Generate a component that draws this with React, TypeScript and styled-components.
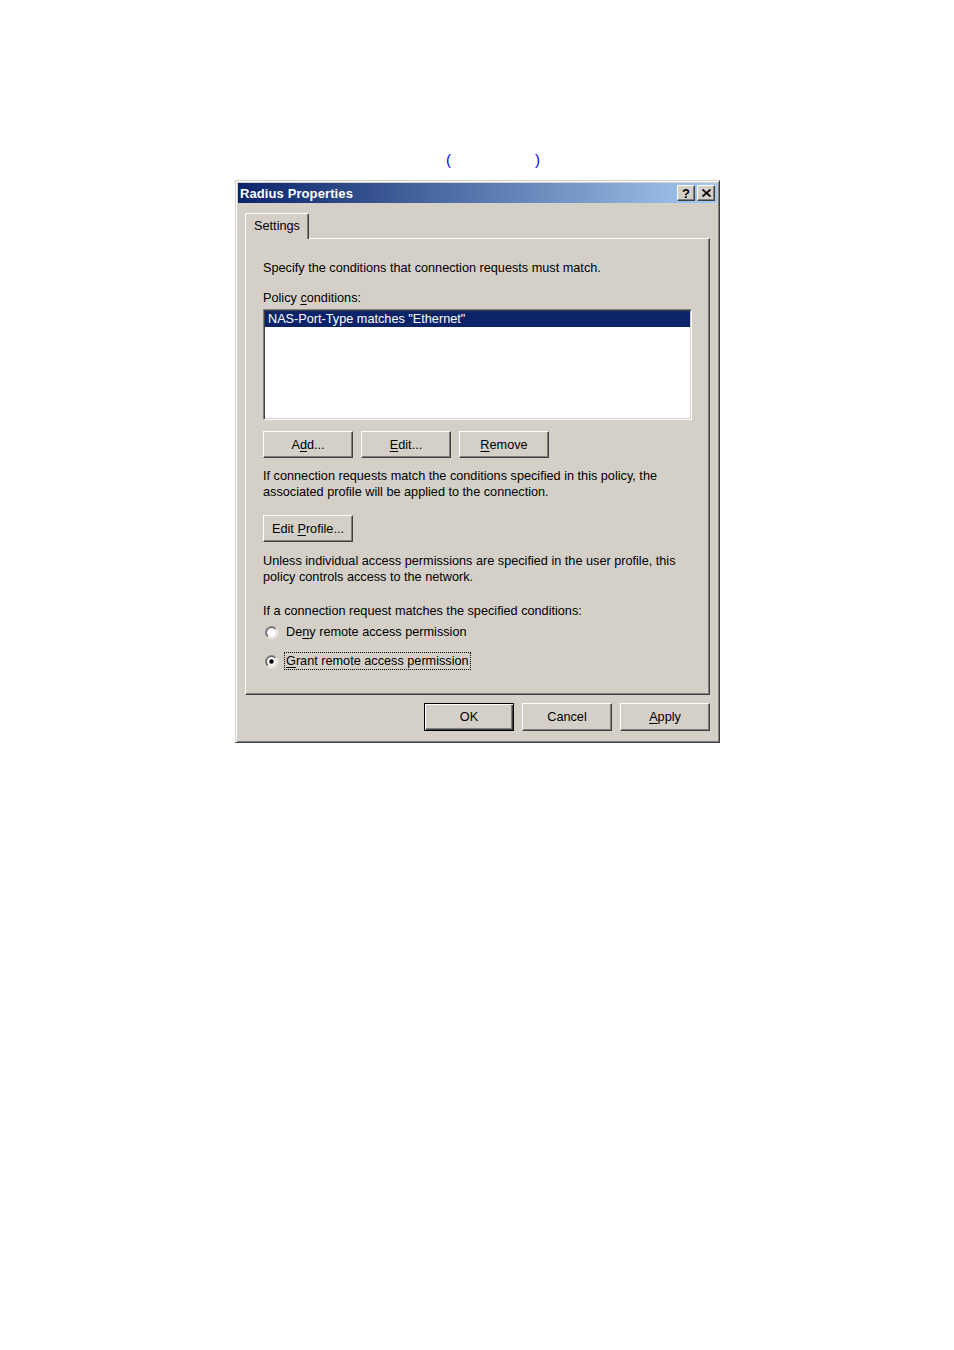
import React, { FunctionComponent, ReactNode } from 'react';
import styled, { createGlobalStyle, css } from 'styled-components';

const face = '#d4d0c8';
const shadow = '#808080';
const darkShadow = '#404040';

const GlobalStyle = createGlobalStyle`
  html, body {
    margin: 0;
    background: #fff;
  }
  body {
    font-family: "Liberation Sans", Arial, sans-serif;
    font-size: 12.7px;
    color: #000;
  }
`;

const Page = styled.div`
  padding: 150px 0 0 235px;
`;

const Caption = styled.div`
  display: flex;
  gap: 84px;
  height: 20px;
  align-items: center;
  padding-left: 211px;
  color: #0000ff;
  font-size: 15px;
  line-height: 20px;
`;

const Window = styled.div`
  box-sizing: border-box;
  width: 485px;
  height: 563px;
  margin-top: 10px;
  padding: 2px;
  background: ${face};
  border: 1px solid;
  border-color: ${face} ${darkShadow} ${darkShadow} ${face};
  box-shadow: inset 1px 1px #fff, inset -1px -1px ${shadow};
  display: flex;
  flex-direction: column;
`;

const TitleBar = styled.div`
  height: 20px;
  display: flex;
  align-items: center;
  justify-content: space-between;
  padding: 0 2px 0 2px;
  background: linear-gradient(to right, #0a246a, #a6caf0);
`;

const Title = styled.span`
  color: #fff;
  font-weight: bold;
  font-size: 13px;
  letter-spacing: 0.1px;
`;

const TitleControls = styled.div`
  display: flex;
  gap: 2px;
`;

const TitleButton = styled.div`
  box-sizing: border-box;
  width: 18px;
  height: 16px;
  display: flex;
  align-items: center;
  justify-content: center;
  background: ${face};
  border: 1px solid;
  border-color: #fff ${darkShadow} ${darkShadow} #fff;
  box-shadow: inset -1px -1px ${shadow};
  font-weight: bold;
  font-size: 13px;
  line-height: 1;
`;

const Body = styled.div`
  flex: 1;
  display: flex;
  flex-direction: column;
  padding: 10px 7px 0 7px;
`;

const TabStrip = styled.div`
  display: flex;
  height: 25px;
  position: relative;
  z-index: 1;
`;

const Tab = styled.div`
  box-sizing: border-box;
  height: 26px;
  width: 64px;
  display: flex;
  align-items: center;
  justify-content: center;
  background: ${face};
  border: 1px solid;
  border-bottom: none;
  border-color: #fff ${darkShadow} transparent #fff;
  border-radius: 2px 2px 0 0;
  box-shadow: inset -1px 0 ${shadow};
  padding-bottom: 1px;
`;

const TabPanel = styled.div`
  box-sizing: border-box;
  height: 457px;
  padding: 21px 16px 0 17px;
  border: 1px solid;
  border-color: #fff ${darkShadow} ${darkShadow} #fff;
  box-shadow: inset -1px -1px ${shadow};
  display: flex;
  flex-direction: column;
`;

const Text = styled.div<{ $top?: number }>`
  margin-top: ${({ $top = 0 }) => $top}px;
  line-height: 16px;
  white-space: nowrap;
`;

const U = styled.span`
  text-decoration: underline;
  text-underline-offset: 2px;
`;

const ListBox = styled.div`
  box-sizing: border-box;
  margin-top: 3px;
  width: 429px;
  height: 111px;
  padding: 1px;
  background: #fff;
  border: 1px solid;
  border-color: ${shadow} #fff #fff ${shadow};
  box-shadow: inset 1px 1px ${darkShadow}, inset -1px -1px ${face};
`;

const ListItem = styled.div<{ $selected?: boolean }>`
  height: 16px;
  line-height: 16px;
  padding-left: 3px;
  white-space: nowrap;
  ${({ $selected }) =>
    $selected &&
    css`
      background: #0a246a;
      color: #fff;
    `}
`;

const ButtonRow = styled.div<{ $top?: number; $end?: boolean }>`
  display: flex;
  gap: 8px;
  margin-top: ${({ $top = 0 }) => $top}px;
  justify-content: ${({ $end }) => ($end ? 'flex-end' : 'flex-start')};
`;

const Button = styled.div<{ $default?: boolean; $tall?: boolean }>`
  box-sizing: border-box;
  width: 90px;
  height: ${({ $tall }) => ($tall ? 28 : 27)}px;
  line-height: ${({ $tall }) => ($tall ? 27 : 26)}px;
  text-align: center;
  white-space: nowrap;
  background: ${face};
  border: 1px solid;
  border-color: #fff ${darkShadow} ${darkShadow} #fff;
  box-shadow: inset -1px -1px ${shadow};
  ${({ $default }) =>
    $default &&
    css`
      border-color: #000;
      box-shadow: inset 1px 1px #fff, inset -1px -1px ${darkShadow}, inset -2px -2px ${shadow};
    `}
`;

const RadioRow = styled.div<{ $top?: number }>`
  display: flex;
  align-items: center;
  gap: 6px;
  margin-top: ${({ $top = 0 }) => $top}px;
  padding-left: 2px;
`;

const RadioLabel = styled.span<{ $focused?: boolean }>`
  line-height: 16px;
  padding: 0 1px;
  border: 1px dotted ${({ $focused }) => ($focused ? '#000' : 'transparent')};
  white-space: nowrap;
`;

const Footer = styled.div`
  margin-top: 8px;
`;

const CloseGlyph = () => (
  <svg width="9" height="8" viewBox="0 0 9 8">
    <path d="M0.5 0.5 L8.5 7.5 M8.5 0.5 L0.5 7.5" stroke="#000" strokeWidth="1.7" />
  </svg>
);

const RadioGlyph: FunctionComponent<{ checked?: boolean }> = ({ checked }) => (
  <svg width="13" height="13" viewBox="0 0 13 13">
    <defs>
      <linearGradient id="radioOuter" x1="0" y1="0" x2="1" y2="1">
        <stop offset="0.5" stopColor={shadow} />
        <stop offset="0.5" stopColor="#fff" />
      </linearGradient>
      <linearGradient id="radioInner" x1="0" y1="0" x2="1" y2="1">
        <stop offset="0.5" stopColor={darkShadow} />
        <stop offset="0.5" stopColor={face} />
      </linearGradient>
    </defs>
    <circle cx="6.5" cy="6.5" r="6" fill="none" stroke="url(#radioOuter)" strokeWidth="1" />
    <circle cx="6.5" cy="6.5" r="5" fill="#fff" stroke="url(#radioInner)" strokeWidth="1" />
    {checked && <circle cx="6.5" cy="6.5" r="2.3" fill="#000" />}
  </svg>
);

const Radio: FunctionComponent<{ checked?: boolean; focused?: boolean; top?: number; children: ReactNode }> = ({
  checked,
  focused,
  top,
  children,
}) => (
  <RadioRow $top={top}>
    <RadioGlyph checked={checked} />
    <RadioLabel $focused={focused}>{children}</RadioLabel>
  </RadioRow>
);

const App = () => (
  <>
    <GlobalStyle />
    <Page>
      <Caption>
        <span>(</span>
        <span>)</span>
      </Caption>
      <Window>
        <TitleBar>
          <Title>Radius Properties</Title>
          <TitleControls>
            <TitleButton>?</TitleButton>
            <TitleButton>
              <CloseGlyph />
            </TitleButton>
          </TitleControls>
        </TitleBar>
        <Body>
          <TabStrip>
            <Tab>Settings</Tab>
          </TabStrip>
          <TabPanel>
            <Text>Specify the conditions that connection requests must match.</Text>
            <Text $top={14}>
              Policy <U>c</U>onditions:
            </Text>
            <ListBox>
              <ListItem $selected>NAS-Port-Type matches "Ethernet"</ListItem>
            </ListBox>
            <ButtonRow $top={11}>
              <Button>
                A<U>d</U>d...
              </Button>
              <Button>
                <U>E</U>dit...
              </Button>
              <Button>
                <U>R</U>emove
              </Button>
            </ButtonRow>
            <Text $top={10}>
              If connection requests match the conditions specified in this policy, the
              <br />
              associated profile will be applied to the connection.
            </Text>
            <ButtonRow $top={15}>
              <Button>
                Edit <U>P</U>rofile...
              </Button>
            </ButtonRow>
            <Text $top={11}>
              Unless individual access permissions are specified in the user profile, this
              <br />
              policy controls access to the network.
            </Text>
            <Text $top={18}>If a connection request matches the specified conditions:</Text>
            <Radio top={4}>
              De<U>n</U>y remote access permission
            </Radio>
            <Radio top={11} checked focused>
              <U>G</U>rant remote access permission
            </Radio>
          </TabPanel>
          <Footer>
            <ButtonRow $end>
              <Button $default $tall>
                OK
              </Button>
              <Button $tall>Cancel</Button>
              <Button $tall>
                <U>A</U>pply
              </Button>
            </ButtonRow>
          </Footer>
        </Body>
      </Window>
    </Page>
  </>
);

export default App;
